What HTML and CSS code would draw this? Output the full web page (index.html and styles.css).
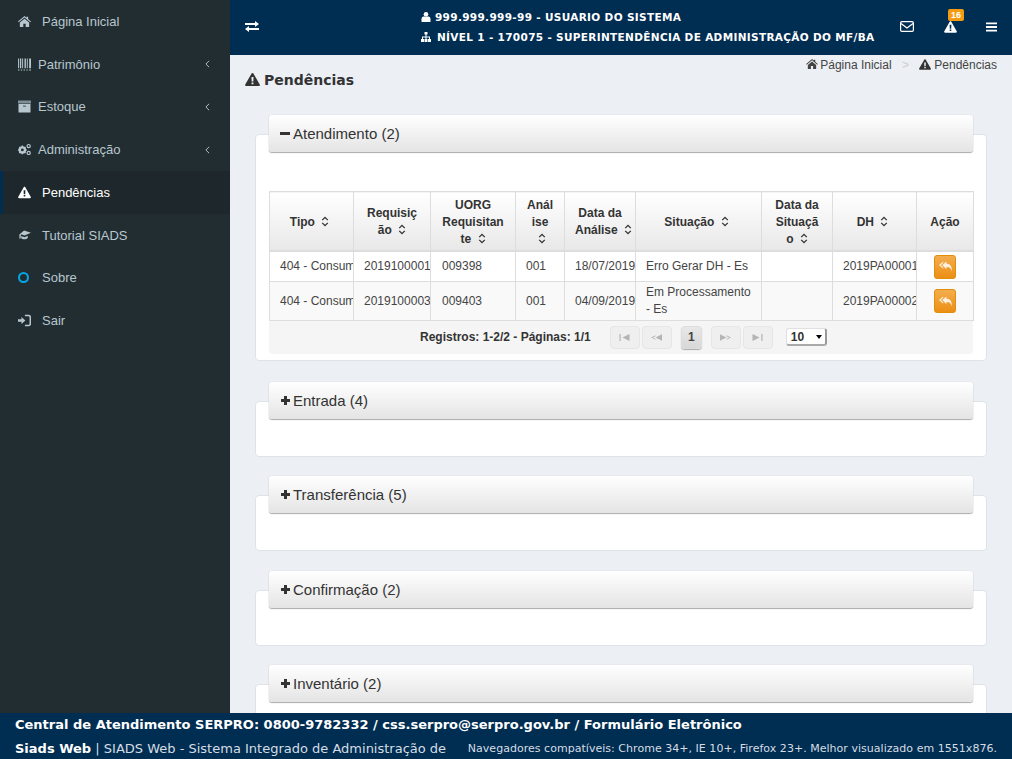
FILE: index.html
```html
<!DOCTYPE html>
<html lang="pt-BR">
<head>
    <meta charset="UTF-8">
    <title>SIADS Web - Pendências</title>
    <link rel="stylesheet" href="styles.css">
</head>
<body>
    <svg class="defs" width="0" height="0">
        <symbol id="i-warn" viewBox="0 0 16 14"><path fill-rule="evenodd" d="M8 0c.4 0 .8.2 1 .6l6.800 11.800c.4.7-.1 1.600-1 1.600H1.200c-.9 0-1.400-.9-1-1.600L7 .6C7.200.2 7.600 0 8 0zM6.900 4.200l.2 5h1.800l.2-5zM7 10.200V12h2v-1.800z"/></symbol>
        <symbol id="i-home" viewBox="0 0 14 12"><path d="M7 0l2.200 1.900V.8h1.700v2.600L14 6l-.7.8L7 1.600.7 6.800 0 6zM2 7.200L7 3l5 4.200V12H8.300V8.500H5.700V12H2z"/></symbol>
        <symbol id="i-sort" viewBox="0 0 8 12"><path fill="none" stroke="currentColor" stroke-width="1.500" d="M1 4.500L4 1.500l3 3M1 7.500l3 3 3-3"/></symbol>
        <symbol id="i-reply" viewBox="0 0 14 11"><path d="M4.500 0v1.600L2 4l2.500 2.400V8L0 4zM8 0v2.500c4 0 6 2.500 6 8.500-1-3.500-2.500-5-6-5v2.500L3.500 4z"/></symbol>
    </svg>

    <aside class="sidebar">
        <a class="nav-item"><svg class="nav-icon"><use href="#i-home"/></svg><span class="nav-text">Página Inicial</span></a>
        <a class="nav-item sub">
            <svg class="nav-icon wide" viewBox="0 0 14 13"><path fill="currentColor" d="M0 0h1v10.500H0zM2 0h1.500v10.500H2zM4.500 0h1v10.500h-1zM7 0h1.500v10.500H7zM9.500 0h1v10.500h-1zM12 0h2v10.500h-2zM0 12h1.500v1H0zM3 12h1.500v1H3zM6 12h1.500v1H6zM9 12h1.500v1H9zM12 12h2v1h-2z"/></svg>
            <span class="nav-text">Patrimônio</span>
            <svg class="nav-arrow" viewBox="0 0 6 10"><path fill="none" stroke="currentColor" stroke-width="1.200" d="M5 1L1 5l4 4"/></svg>
        </a>
        <a class="nav-item sub">
            <svg class="nav-icon wide" viewBox="0 0 13 12"><path fill="#7f8f98" d="M0 0h13v3H0z"/><path fill="currentColor" d="M.5 3.500h12V12H.5z"/><path fill="#5d6d76" d="M5 5h3v1.300H5z"/></svg>
            <span class="nav-text">Estoque</span>
            <svg class="nav-arrow" viewBox="0 0 6 10"><path fill="none" stroke="currentColor" stroke-width="1.200" d="M5 1L1 5l4 4"/></svg>
        </a>
        <a class="nav-item sub">
            <svg class="nav-icon wide" viewBox="0 0 14 12"><circle cx="4.700" cy="6.500" r="2.900" fill="none" stroke="currentColor" stroke-width="2.300"/><path stroke="currentColor" stroke-width="1.500" d="M4.700 1.800v9.400M0 6.500h9.400M1.400 3.200l6.600 6.600M8 3.200l-6.600 6.600"/><circle cx="4.700" cy="6.500" r="1.500" fill="#222d32"/><circle cx="11.500" cy="2.300" r="1.700" fill="none" stroke="currentColor" stroke-width="1.300"/><circle cx="11.500" cy="9.700" r="1.700" fill="none" stroke="currentColor" stroke-width="1.300"/></svg>
            <span class="nav-text">Administração</span>
            <svg class="nav-arrow" viewBox="0 0 6 10"><path fill="none" stroke="currentColor" stroke-width="1.200" d="M5 1L1 5l4 4"/></svg>
        </a>
        <a class="nav-item active"><svg class="nav-icon"><use href="#i-warn"/></svg><span class="nav-text">Pendências</span></a>
        <a class="nav-item"><svg class="nav-icon" viewBox="0 0 14 11"><path fill="currentColor" d="M6.500 0L14 2.500 7 5.500 4 4.300 3 4.800V8L2 9.500 1.500 8V4.300zM3.500 6l3.500 1.300 3.500-1.500v2.500C9 10 5 10 3.500 8.500z"/></svg><span class="nav-text">Tutorial SIADS</span></a>
        <a class="nav-item"><span class="nav-circle"></span><span class="nav-text">Sobre</span></a>
        <a class="nav-item"><svg class="nav-icon" viewBox="0 0 15 13"><path fill="currentColor" d="M0 5h4V2.500L8.500 6.500 4 10.500V8H0zM8 0h4.500C14 0 15 1 15 2.500v8c0 1.500-1 2.500-2.500 2.500H8v-1.700h4.300c.6 0 1-.4 1-1V2.700c0-.6-.4-1-1-1H8z"/></svg><span class="nav-text">Sair</span></a>
    </aside>

    <div class="main">
        <header class="topbar">
            <svg class="top-toggle" viewBox="0 0 14 11"><path fill="#fff" d="M0 2h10V0l4 3-4 3V4H0zM14 7H4V5L0 8l4 3V9h10z"/></svg>
            <div class="top-user">
                <div class="top-line">
                    <svg class="top-mini" viewBox="0 0 9 10"><circle cx="4.500" cy="2.300" r="2.300" fill="#fff"/><path fill="#fff" d="M0 10V7c0-1.500 1-2.500 2-2.500h5c1 0 2 1 2 2.500v3z"/></svg>
                    999.999.999-99 - USUARIO DO SISTEMA
                </div>
                <div class="top-line">
                    <svg class="top-mini org" viewBox="0 0 10 10"><path fill="#fff" d="M3.500 0h3v2.500h-3zM4.500 2.500h1V4.500H9V7H8V5.500H5.500V7h-1V5.500H2V7H1V4.500h3.500zM0 7h3v3H0zM3.500 7h3v3h-3zM7 7h3v3H7z"/></svg>
                    NÍVEL 1 - 170075 - SUPERINTENDÊNCIA DE ADMINISTRAÇÃO DO MF/BA
                </div>
            </div>
            <div class="top-icons">
                <svg class="top-mail" viewBox="0 0 14 11"><rect x=".6" y=".6" width="12.800" height="9.800" rx="1.300" fill="none" stroke="#fff" stroke-width="1.200"/><path fill="none" stroke="#fff" stroke-width="1.200" d="M1 2.500l6 4.500 6-4.500"/></svg>
                <span class="top-alert"><svg class="top-warn"><use href="#i-warn"/></svg><span class="badge">16</span></span>
                <svg class="top-bars" viewBox="0 0 12 10"><path fill="#fff" d="M0 0h12v2H0zM0 4h12v2H0zM0 8h12v2H0z"/></svg>
            </div>
        </header>

        <div class="content">
            <div class="page-head">
                <h1 class="page-title"><svg class="title-icon"><use href="#i-warn"/></svg>Pendências</h1>
                <div class="crumbs">
                    <svg class="crumb-home"><use href="#i-home"/></svg>Página Inicial
                    <span class="crumb-sep">&gt;</span>
                    <svg class="crumb-warn"><use href="#i-warn"/></svg>Pendências
                </div>
            </div>

            <section class="widget open">
                <div class="widget-head"><span class="minus"></span>Atendimento (2)</div>
                <div class="widget-body">
                    <table class="grid">
                        <colgroup>
                            <col class="c-tipo"><col class="c-req"><col class="c-uorg"><col class="c-an"><col class="c-data"><col class="c-sit"><col class="c-dsit"><col class="c-dh"><col class="c-acao">
                        </colgroup>
                        <thead>
                            <tr>
                                <th class="th-one">Tipo <svg class="sort"><use href="#i-sort"/></svg></th>
                                <th>Requisição <svg class="sort"><use href="#i-sort"/></svg></th>
                                <th>UORG Requisitante <svg class="sort"><use href="#i-sort"/></svg></th>
                                <th>Análise <svg class="sort"><use href="#i-sort"/></svg></th>
                                <th>Data da <span class="keep">Análise <svg class="sort"><use href="#i-sort"/></svg></span></th>
                                <th class="th-one">Situação <svg class="sort"><use href="#i-sort"/></svg></th>
                                <th class="th-narrow">Data da Situação <svg class="sort"><use href="#i-sort"/></svg></th>
                                <th class="th-one">DH <svg class="sort"><use href="#i-sort"/></svg></th>
                                <th>Ação</th>
                            </tr>
                        </thead>
                        <tbody>
                            <tr>
                                <td class="clip">404 - Consumo</td><td class="clip">2019100001</td><td class="td-uorg">009398</td><td>001</td><td class="clip">18/07/2019</td><td>Erro Gerar DH - Es</td><td></td><td class="clip">2019PA00001</td>
                                <td class="act"><button class="btn-act"><svg><use href="#i-reply"/></svg></button></td>
                            </tr>
                            <tr class="alt">
                                <td class="clip">404 - Consumo</td><td class="clip">2019100003</td><td class="td-uorg">009403</td><td>001</td><td class="clip">04/09/2019</td><td>Em Processamento - Es</td><td></td><td class="clip">2019PA00002</td>
                                <td class="act"><button class="btn-act"><svg><use href="#i-reply"/></svg></button></td>
                            </tr>
                        </tbody>
                    </table>
                    <div class="pager">
                        <span class="pager-info">Registros: 1-2/2 - Páginas: 1/1</span>
                        <span class="pg"><svg viewBox="0 0 10 7"><path d="M0 0h1.200v7H0zM10 0v7L3 3.500z"/></svg></span>
                        <span class="pg pg-prev"><svg viewBox="0 0 12 7"><path d="M5 1v1L2 3.500 5 5v1L0 3.500zM12 0v7L5 3.500z"/></svg></span>
                        <span class="pg pg-cur">1</span>
                        <span class="pg"><svg viewBox="0 0 12 7"><path d="M0 0l7 3.500L0 7zM7 1l5 2.500L7 6V5l3-1.500L7 2z"/></svg></span>
                        <span class="pg pg-last"><svg viewBox="0 0 10 7"><path d="M0 0l7 3.500L0 7zM8.800 0H10v7H8.800z"/></svg></span>
                        <span class="pg-size">10<i class="pg-caret"></i></span>
                    </div>
                </div>
            </section>

            <section class="widget"><div class="widget-head"><span class="plus"></span>Entrada (4)</div></section>
            <section class="widget"><div class="widget-head"><span class="plus"></span>Transferência (5)</div></section>
            <section class="widget"><div class="widget-head"><span class="plus"></span>Confirmação (2)</div></section>
            <section class="widget"><div class="widget-head"><span class="plus"></span>Inventário (2)</div></section>
        </div>
    </div>

    <footer class="footer">
        <div class="foot-line"><b>Central de Atendimento SERPRO: 0800-9782332 / css.serpro@serpro.gov.br / Formulário Eletrônico</b></div>
        <div class="foot-line foot-second">
            <span class="foot-sys"><b>Siads Web</b> | SIADS Web - Sistema Integrado de Administração de</span>
            <span class="foot-nav">Navegadores compatíveis: Chrome 34+, IE 10+, Firefox 23+. Melhor visualizado em 1551x876.</span>
        </div>
    </footer>
</body>
</html>
```

FILE: styles.css
```css
html, body {
    height: 100%;
}
body {
    margin: 0;
    display: flex;
    height: 759px;
    overflow: hidden;
    font-family: "Liberation Sans", Arial, sans-serif;
    font-size: 12px;
    color: #333;
    background: #ecf0f5;
}
.defs {
    position: absolute;
}

/* sidebar */
.sidebar {
    width: 230px;
    flex: none;
    background: #222d32;
}
.nav-item {
    display: flex;
    align-items: center;
    height: 42.750px;
    padding-left: 18px;
    box-sizing: border-box;
    color: #b8c7ce;
    font-size: 13px;
}
.nav-icon {
    width: 13px;
    height: 13px;
    margin-right: 11px;
    flex: none;
    fill: currentColor;
    color: #b8c7ce;
}
.nav-icon.wide {
    margin-right: 7px;
}
.nav-item.sub {
    padding-right: 20px;
}
.nav-text {
    flex: 1;
}
.nav-arrow {
    width: 5px;
    height: 8px;
    flex: none;
}
.nav-item.active {
    background: #1e282c;
    color: #fff;
    border-left: 3px solid #002d52;
    padding-left: 15px;
}
.nav-item.active .nav-icon {
    color: #fff;
}
.nav-circle {
    width: 7px;
    height: 7px;
    border: 2px solid #00a9e8;
    border-radius: 50%;
    margin-right: 13px;
    flex: none;
}

/* top bar */
.main {
    flex: 1;
    min-width: 0;
}
.topbar {
    display: flex;
    align-items: center;
    height: 55px;
    padding-bottom: 2px;
    box-sizing: border-box;
    background: #002d52;
    color: #fff;
}
.top-toggle {
    width: 14px;
    height: 11px;
    margin-left: 15px;
    flex: none;
}
.top-user {
    margin-left: 162px;
    font-family: "DejaVu Sans", sans-serif;
    font-size: 10.500px;
    font-weight: bold;
    letter-spacing: .33px;
}
.top-line {
    height: 20px;
    line-height: 20px;
    white-space: nowrap;
}
.top-mini {
    width: 10px;
    height: 10px;
    vertical-align: -1px;
}
.top-mini.org {
    margin-right: 2px;
}
.top-icons {
    display: flex;
    align-items: center;
    margin-left: auto;
    padding-right: 15px;
}
.top-mail {
    width: 14px;
    height: 11px;
}
.top-alert {
    position: relative;
    display: flex;
    margin-left: 30px;
}
.top-warn {
    width: 13px;
    height: 12px;
    fill: #fff;
}
.badge {
    position: absolute;
    top: -12px;
    left: 4px;
    width: 16px;
    height: 12px;
    line-height: 12px;
    border-radius: 2px;
    text-align: center;
    font-size: 9px;
    font-weight: bold;
    background: #f39c12;
    color: #fff;
}
.top-bars {
    width: 11px;
    height: 10px;
    margin-left: 29px;
}

/* title and breadcrumb */
.content {
    padding: 0 25px;
}
.page-head {
    display: flex;
    justify-content: space-between;
    height: 60px;
    margin: 0 -10px;
}
.page-title {
    margin: 17px 0 0;
    font-family: "DejaVu Sans", sans-serif;
    font-size: 14px;
    line-height: 16px;
    font-weight: bold;
    color: #333;
}
.title-icon {
    width: 15px;
    height: 13px;
    margin-right: 4px;
    vertical-align: -1px;
    fill: #333;
}
.crumbs {
    margin-top: 3px;
    font-size: 12px;
    line-height: 14px;
    color: #444;
}
.crumb-home {
    width: 12px;
    height: 10px;
    margin-right: 2px;
    fill: #444;
}
.crumb-warn {
    width: 12px;
    height: 11px;
    margin-right: 3px;
    fill: #333;
    vertical-align: -1px;
}
.crumb-sep {
    margin: 0 7px;
    color: #ccc;
}

/* collapsible boxes */
.widget {
    background: #fff;
    border: 1px solid #dfe3e8;
    border-radius: 4px;
    height: 54px;
    margin: 19px 0 38.600px;
}
.widget.open {
    height: 225px;
    margin-bottom: 39.600px;
}
.widget-head {
    display: flex;
    align-items: center;
    height: 37px;
    margin: -20px 13px 0;
    padding-left: 11px;
    box-sizing: border-box;
    border-radius: 3px;
    background: linear-gradient(#fff, #e4e4e4);
    box-shadow: 0 1px 1px #aaa, 0 0 1px #bbb;
    font-size: 15px;
    color: #333;
}
.minus {
    width: 10px;
    height: 3px;
    margin-right: 3px;
    background: #333;
}
.plus {
    position: relative;
    width: 9px;
    height: 3px;
    margin: 0 3px 0 1px;
    background: #333;
}
.plus::after {
    content: "";
    position: absolute;
    left: 3px;
    top: -3px;
    width: 3px;
    height: 9px;
    background: #333;
}
.widget-body {
    margin: 39px 13px 0;
}

/* table */
.grid {
    width: 704px;
    table-layout: fixed;
    border-collapse: collapse;
    font-size: 12px;
}
.c-tipo { width: 84px; }
.c-req { width: 77px; }
.c-uorg { width: 85px; }
.c-an { width: 49px; }
.c-data { width: 71px; }
.c-sit { width: 126px; }
.c-dsit { width: 71px; }
.c-dh { width: 84px; }
.c-acao { width: 57px; }
.grid th {
    height: 56px;
    padding: 2px 10px 0;
    border: 1px solid #ddd;
    border-bottom-width: 2px;
    background: linear-gradient(#fff, #e8e8e8);
    font-weight: bold;
    line-height: 17px;
    text-align: center;
    overflow-wrap: break-word;
    color: #333;
}
.grid th.th-one {
    padding: 2px 12px 0 8px;
}
.grid th.th-narrow {
    padding: 2px 11px 0;
}
.keep {
    white-space: nowrap;
}
.grid td {
    height: 29px;
    padding: 0 10px;
    border: 1px solid #ddd;
    line-height: 17px;
    color: #444;
    overflow: hidden;
}
.grid .alt td {
    height: 38px;
    background: #f9f9f9;
}
.grid td.clip {
    white-space: nowrap;
    padding-right: 0;
}
.grid td.td-uorg {
    padding-left: 11px;
}
.grid td.act {
    padding: 0;
    text-align: center;
}
.sort {
    width: 8px;
    height: 11px;
    margin-left: 3px;
    vertical-align: -1px;
}
.btn-act {
    display: inline-flex;
    align-items: center;
    justify-content: center;
    width: 22px;
    height: 24px;
    padding: 0;
    vertical-align: middle;
    border: 1px solid #e08e0b;
    border-radius: 3px;
    background: linear-gradient(#f3ad4e, #ec8f14);
}
.btn-act svg {
    width: 13px;
    height: 11px;
    fill: #fdf0dc;
}

/* pager */
.pager {
    display: flex;
    align-items: center;
    height: 33px;
    padding-bottom: 1px;
    box-sizing: border-box;
    background: #f5f5f5;
    border-radius: 0 0 4px 4px;
    font-size: 12px;
}
.pager-info {
    margin-left: 151px;
    margin-right: 19px;
    font-weight: bold;
    color: #333;
}
.pg {
    display: flex;
    align-items: center;
    justify-content: center;
    height: 23px;
    width: 30px;
    margin-right: 2px;
    border: 1px solid #e6e6e6;
    border-radius: 4px;
    box-sizing: border-box;
    background: #efefef;
}
.pg svg {
    height: 7px;
    width: 11px;
    fill: #b4b4b4;
}
.pg-prev {
    margin-right: 9px;
}
.pg-cur {
    width: 21px;
    margin-right: 9px;
    background: linear-gradient(#e8e8e8, #d8d8d8);
    border-color: #ddd;
    box-shadow: 0 1px 1px #aaa;
    font-size: 12px;
    font-weight: bold;
    color: #444;
}
.pg-last {
    margin-right: 13px;
}
.pg-size {
    position: relative;
    width: 41px;
    height: 18px;
    box-sizing: border-box;
    padding-left: 4px;
    line-height: 16px;
    border: 1px solid #e0e0e0;
    border-right: 2px solid #999;
    border-bottom: 2px solid #aaa;
    border-radius: 3px;
    background: #fff;
    font-weight: bold;
    color: #333;
}
.pg-caret {
    position: absolute;
    right: 3px;
    top: 6px;
    border: 3.500px solid transparent;
    border-top: 4px solid #000;
    border-bottom: 0;
}

/* footer */
.footer {
    position: fixed;
    left: 0;
    right: 0;
    bottom: 0;
    height: 46px;
    padding-left: 15px;
    background: #002d52;
    color: #d5dde4;
    font-family: "DejaVu Sans", sans-serif;
    font-size: 13px;
}
.footer b {
    color: #fff;
}
.foot-line {
    height: 24px;
    line-height: 23px;
    white-space: nowrap;
}
.foot-second {
    display: flex;
    justify-content: space-between;
    padding-right: 15px;
}
.foot-nav {
    font-size: 11px;
    letter-spacing: .03px;
}
```
